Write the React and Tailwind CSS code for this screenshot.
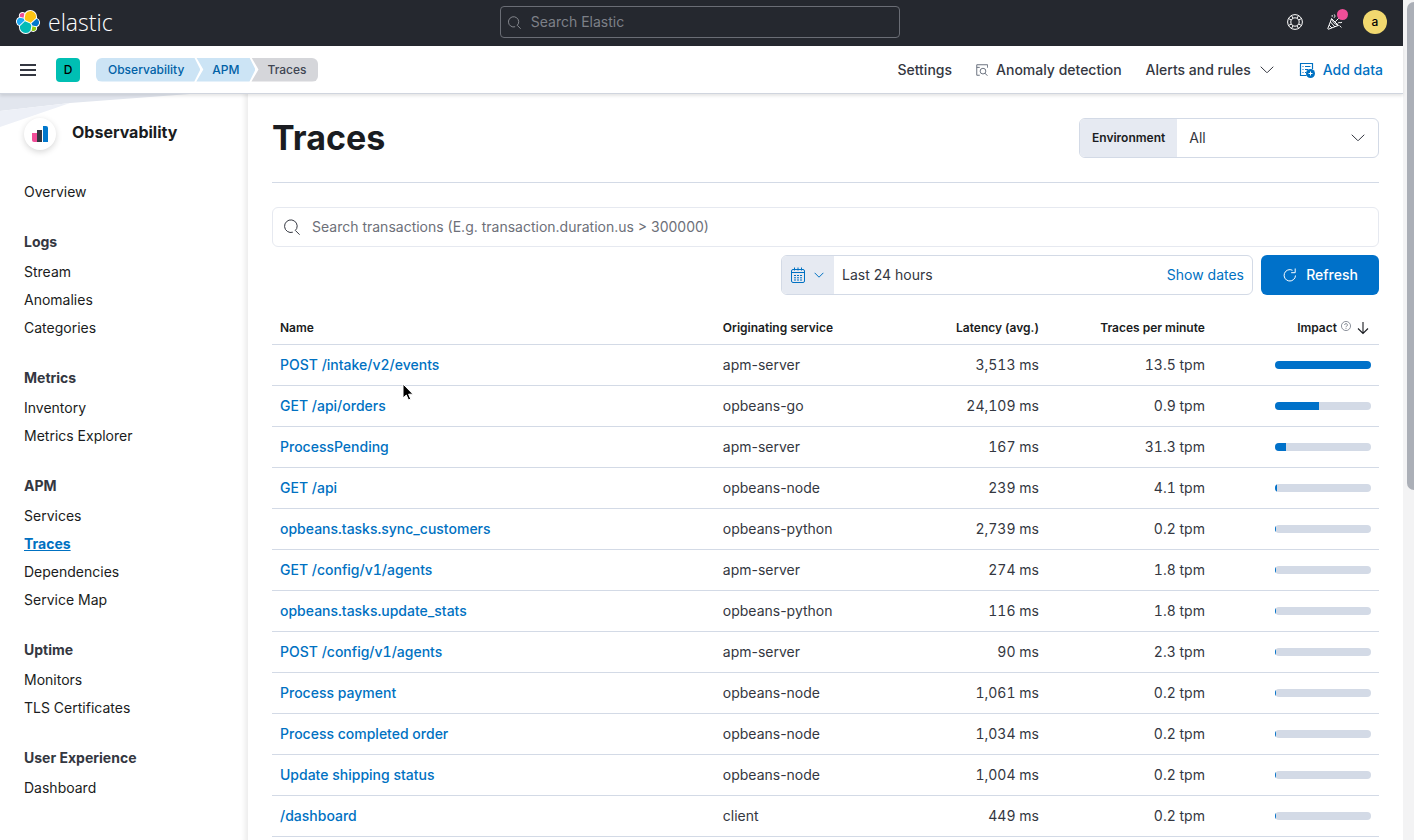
import { useState } from 'react'

const NAV = [
  { title: 'Logs', items: ['Stream', 'Anomalies', 'Categories'] },
  { title: 'Metrics', items: ['Inventory', 'Metrics Explorer'] },
  { title: 'APM', items: ['Services', 'Traces', 'Dependencies', 'Service Map'] },
  { title: 'Uptime', items: ['Monitors', 'TLS Certificates'] },
  { title: 'User Experience', items: ['Dashboard'] },
]

const TRACES = [
  { name: 'POST /intake/v2/events', service: 'apm-server', latency: '3,513 ms', tpm: '13.5 tpm', impact: 100 },
  { name: 'GET /api/orders', service: 'opbeans-go', latency: '24,109 ms', tpm: '0.9 tpm', impact: 46 },
  { name: 'ProcessPending', service: 'apm-server', latency: '167 ms', tpm: '31.3 tpm', impact: 11.5 },
  { name: 'GET /api', service: 'opbeans-node', latency: '239 ms', tpm: '4.1 tpm', impact: 2 },
  { name: 'opbeans.tasks.sync_customers', service: 'opbeans-python', latency: '2,739 ms', tpm: '0.2 tpm', impact: 1 },
  { name: 'GET /config/v1/agents', service: 'apm-server', latency: '274 ms', tpm: '1.8 tpm', impact: 1 },
  { name: 'opbeans.tasks.update_stats', service: 'opbeans-python', latency: '116 ms', tpm: '1.8 tpm', impact: 1 },
  { name: 'POST /config/v1/agents', service: 'apm-server', latency: '90 ms', tpm: '2.3 tpm', impact: 1 },
  { name: 'Process payment', service: 'opbeans-node', latency: '1,061 ms', tpm: '0.2 tpm', impact: 1 },
  { name: 'Process completed order', service: 'opbeans-node', latency: '1,034 ms', tpm: '0.2 tpm', impact: 1 },
  { name: 'Update shipping status', service: 'opbeans-node', latency: '1,004 ms', tpm: '0.2 tpm', impact: 1 },
  { name: '/dashboard', service: 'client', latency: '449 ms', tpm: '0.2 tpm', impact: 1 },
]

function Icon({ className = 'size-4', children }) {
  return (
    <svg viewBox="0 0 16 16" className={`shrink-0 ${className}`} fill="none" stroke="currentColor" aria-hidden="true">
      {children}
    </svg>
  )
}

function SearchIcon({ className }) {
  return (
    <Icon className={className}>
      <path d="M8.8 13.2A6.3 6.3 0 1 1 12.7 9.6L11.3 11.4 15.6 15.7" />
    </Icon>
  )
}

function ChevronIcon({ className }) {
  return (
    <Icon className={className}>
      <path d="M2 5l5.6 5.4a.6.6 0 0 0 .8 0L14 5" strokeLinecap="round" />
    </Icon>
  )
}

const CLUSTER = [
  ['#fec514', 'M12.58 13.787l7.002 3.211 7.066-6.213a7.849 7.849 0 00.152-1.557c0-4.287-3.464-7.775-7.722-7.775a7.68 7.68 0 00-6.365 3.404l-1.176 6.124 1.043 2.806z'],
  ['#02bcb7', 'M5.333 21.228A7.965 7.965 0 005.17 22.8c0 4.301 3.475 7.8 7.747 7.8a7.72 7.72 0 006.4-3.422l1.166-6.1-1.556-2.987-7.03-3.215-6.564 6.352z'],
  ['#f04e98', 'M5.288 9.067l4.8 1.137L11.14 4.72c-.65-.5-1.46-.76-2.28-.76a3.8 3.8 0 00-3.8 3.8c0 .44.08.88.23 1.3z'],
  ['#1ba9f5', 'M4.872 10.214C2.728 10.93 1.229 13 1.229 15.27c0 2.21 1.36 4.18 3.4 4.96l6.734-6.1-1.236-2.65-5.255-1.27z'],
  ['#93c90e', 'M20.873 27.178a3.738 3.738 0 002.275.785 3.793 3.793 0 003.785-3.81c0-.46-.08-.9-.235-1.31l-4.797-1.13-1.028 5.46z'],
  ['#0077cc', 'M21.848 20.564l5.28 1.236c2.145-.716 3.644-2.786 3.644-5.056 0-2.206-1.362-4.17-3.39-4.95l-6.907 6.06 1.373 2.71z'],
]

function ElasticLogo() {
  return (
    <svg viewBox="0 0 32 32" className="size-6 shrink-0" aria-hidden="true">
      {CLUSTER.map(([fill, d]) => (
        <path key={fill} d={d} fill="#fff" stroke="#fff" strokeWidth="2.6" strokeLinejoin="round" />
      ))}
      {CLUSTER.map(([fill, d]) => (
        <path key={fill} d={d} fill={fill} />
      ))}
    </svg>
  )
}

function TopBar() {
  return (
    <div className="flex h-[46px] items-center justify-between bg-[#25282f] px-4 pb-[2px]">
      <a href="#home" className="flex items-center gap-2 text-white">
        <ElasticLogo />
        <span className="font-['Open_Sans',sans-serif] text-[23px] leading-6 font-light">elastic</span>
      </a>
      <label className="flex h-8 w-[400px] items-center gap-2 rounded border border-[#6a6d75] px-[7px] text-[#9a9ca3]">
        <SearchIcon className="size-[13px]" />
        <input
          type="search"
          aria-label="Search Elastic"
          placeholder="Search Elastic"
          className="ml-[2px] min-w-0 flex-1 bg-transparent text-sm text-white outline-none placeholder:text-[#7d8088]"
        />
      </label>
      <div className="flex items-center gap-6 text-white">
        <button aria-label="Help">
          <Icon>
            <circle cx="8" cy="8" r="7.4" />
            <circle cx="8" cy="8" r="4.2" />
            <path d="M4.3 6L1.6 4.6M6 4.3L4.6 1.6M10 4.3l1.4-2.7M11.7 6l2.7-1.4M11.7 10l2.7 1.4M10 11.7l1.4 2.7M6 11.7l-1.4 2.7M4.3 10l-2.7 1.4" />
          </Icon>
        </button>
        <button aria-label="What's new" className="relative">
          <Icon>
            <path d="M4.6 4.6L.8 14.5c-.1.4.3.8.7.7l9.9-3.8z" strokeLinejoin="round" />
            <path d="M4.6 4.6c.4 2.8 3.4 6 6.8 6.8M3.5 8l4.5 5M2.2 11.2l2.8 2.8" />
            <path d="M7.3 3.5c1-.8.8-1.8.2-2.7M8.5 7.5l3-3M11 9c1.2-1.6 2.6.8 3.8-.6M12.7 11.8l1.4 1.4M5.2 1.5v.8" strokeLinecap="round" />
          </Icon>
          <span className="absolute -top-[5px] -right-[5px] size-[11px] rounded-full bg-[#f04e98]" />
        </button>
        <button aria-label="Account" className="-ml-1 flex size-6 items-center justify-center rounded-full bg-[#f1d86f] text-xs font-medium text-black">
          a
        </button>
      </div>
    </div>
  )
}

function NavHeader() {
  return (
    <div className="relative z-10 flex h-12 items-center justify-between border-b border-[#d0d5de] bg-white px-5 shadow-[0_2px_3px_rgba(0,0,0,0.1)]">
      <div className="flex items-center">
        <button aria-label="Toggle navigation" className="text-[#343741]">
          <Icon>
            <path d="M0 3h16M0 8h16M0 13h16" strokeWidth="2" />
          </Icon>
        </button>
        <button className="ml-5 flex size-6 items-center justify-center rounded bg-[#00bfb3] text-xs font-medium text-black">D</button>
        <nav aria-label="Breadcrumb" className="ml-4 flex h-6 text-xs leading-6 font-medium">
          <a
            href="#observability"
            className="rounded-l-md bg-[#cce4f5] pr-4 pl-3 text-[#0061a6] [clip-path:polygon(0_0,calc(100%-6px)_0,100%_50%,calc(100%-6px)_100%,0_100%)]"
          >
            Observability
          </a>
          <a
            href="#apm"
            className="-ml-1 bg-[#cce4f5] px-4 text-[#0061a6] [clip-path:polygon(0_0,calc(100%-6px)_0,100%_50%,calc(100%-6px)_100%,0_100%,7px_50%)]"
          >
            APM
          </a>
          <span className="-ml-1 rounded-r-md bg-[#d5d6da] pr-3 pl-4 text-[#404552] [clip-path:polygon(0_0,100%_0,100%_100%,0_100%,7px_50%)]">
            Traces
          </span>
        </nav>
      </div>
      <div className="flex items-center gap-6 text-sm font-medium text-[#343741]">
        <a href="#settings">Settings</a>
        <a href="#anomaly" className="flex items-center gap-2">
          <Icon className="size-3 text-[#69707d]">
            <path d="M5 15H1V1h14.5V5M1 4.5h4" strokeWidth="1.3" />
            <circle cx="9.3" cy="9.5" r="3.8" strokeWidth="1.3" />
            <path d="M12 12.5l3.5 3.2" strokeWidth="1.3" />
          </Icon>
          Anomaly detection
        </a>
        <button className="flex items-center gap-2">
          Alerts and rules
          <ChevronIcon />
        </button>
        <a href="#add" className="flex items-center gap-2 text-[#0071c2]">
          <Icon>
            <path d="M7.5 13.5H1.5v-12h12V7" strokeWidth="1.2" />
            <path d="M3.5 4.5h1M6 4.5h5.5M3.5 7.5h1M6 7.5h3M3.5 10.5h1M6 10.5h1" />
            <circle cx="11.5" cy="11.5" r="4.5" fill="currentColor" stroke="none" />
            <path d="M11.5 9.5v4M9.5 11.5h4" stroke="#fff" />
          </Icon>
          Add data
        </a>
      </div>
    </div>
  )
}

function SideNav() {
  return (
    <aside className="relative w-[248px] shrink-0 px-6 pt-6 pb-8 text-sm text-[#1a1c21] shadow-[inset_-7px_0_5px_-4px_rgba(0,0,0,0.08)]">
      <svg viewBox="0 0 240 40" className="absolute top-0 left-0 h-10 w-60" aria-hidden="true">
        <path d="M0 0h190L70 9 0 17z" fill="#e2e6ee" />
        <path d="M0 17l70-8L0 33z" fill="#edf0f7" />
      </svg>
      <div className="relative flex items-start gap-4">
        <span className="flex size-8 items-center justify-center rounded-full bg-white shadow-[0_2px_6px_rgba(0,0,0,0.16)]">
          <svg viewBox="0 0 16 16" className="size-4" aria-hidden="true">
            <path d="M0 7h5v9H2a2 2 0 0 1-2-2z" fill="#f04e98" />
            <path d="M5 4h5v12H5z" fill="#343741" />
            <path d="M11 0h3a2 2 0 0 1 2 2v14h-5z" fill="#0077cc" />
          </svg>
        </span>
        <h2 className="text-base leading-7 font-bold">Observability</h2>
      </div>
      <nav aria-label="Observability" className="mt-7">
        <a href="#overview" className="block leading-7">
          Overview
        </a>
        {NAV.map((section) => (
          <div key={section.title} className="mt-6">
            <h3 className="mb-1 leading-6 font-bold text-[#343741]">{section.title}</h3>
            <ul>
              {section.items.map((item) => (
                <li key={item} className="leading-7">
                  <a href={`#${item}`} className={item === 'Traces' ? 'font-bold text-[#0071c2] underline' : ''}>
                    {item}
                  </a>
                </li>
              ))}
            </ul>
          </div>
        ))}
      </nav>
    </aside>
  )
}

function TracesTable() {
  return (
    <table className="mt-4 w-full table-fixed text-sm text-[#343741]">
      <thead>
        <tr className="h-[33px] border-b border-[#d3dae6] text-xs text-[#1a1c21]">
          <th className="w-[40%] px-2 pt-[2px] text-left font-semibold">Name</th>
          <th className="w-[15%] px-2 pt-[2px] text-left font-semibold">Originating service</th>
          <th className="w-[15%] px-2 pt-[2px] text-right font-semibold">Latency (avg.)</th>
          <th className="w-[15%] px-2 pt-[2px] text-right font-semibold">Traces per minute</th>
          <th className="w-[15%] px-2 pt-[2px] font-semibold" aria-sort="descending">
            <button className="ml-auto flex items-center gap-1">
              Impact
              <Icon className="mb-1 size-[10px] text-[#69707d]">
                <circle cx="8" cy="8" r="7.3" strokeWidth="1.2" />
                <path d="M5.8 6.3a2.2 2.2 0 1 1 3.2 2c-.7.4-1 .8-1 1.7M8 11.5v1.3" strokeWidth="1.3" />
              </Icon>
              <Icon>
                <path d="M8 2v11.5M3 8.5l5 5 5-5" strokeWidth="1.1" />
              </Icon>
            </button>
          </th>
        </tr>
      </thead>
      <tbody>
        {TRACES.map((row) => (
          <tr key={row.name} className="h-[41px] border-b border-[#d3dae6]">
            <td className="px-2 tabular-nums">
              <a href="#trace" className="font-medium text-[#0071c2]">
                {row.name}
              </a>
            </td>
            <td className="px-2">{row.service}</td>
            <td className="px-2 text-right tabular-nums">{row.latency}</td>
            <td className="px-2 text-right tabular-nums">{row.tpm}</td>
            <td className="px-2">
              <div className="ml-auto h-2 w-24 overflow-hidden rounded-full bg-[#d3dae6]">
                <div className="h-full bg-[#0071c9]" style={{ width: `${row.impact}%` }} />
              </div>
            </td>
          </tr>
        ))}
      </tbody>
    </table>
  )
}

export default function App() {
  const [query, setQuery] = useState('')
  return (
    <div className="relative flex min-h-screen bg-white font-[Inter,sans-serif]">
      <div className="flex min-w-0 flex-1 flex-col">
        <TopBar />
        <NavHeader />
        <div className="flex flex-1">
          <SideNav />
          <main className="min-w-0 flex-1 px-6 pt-6">
            <div className="flex items-center justify-between border-b border-[#d3dae6] pb-6">
              <h1 className="text-[34px] leading-10 font-bold text-[#1a1c21]">Traces</h1>
              <div className="flex h-10 w-[300px] items-center overflow-hidden rounded-md border border-[#d3dae6]">
                <label htmlFor="environment" className="flex h-full items-center bg-[#e6eaf2] px-3 text-xs font-semibold text-[#1a1c21]">
                  Environment
                </label>
                <div className="relative flex h-full flex-1 items-center">
                  <select id="environment" className="h-full w-full appearance-none bg-transparent px-3 text-sm text-[#343741]">
                    <option>All</option>
                  </select>
                  <ChevronIcon className="pointer-events-none absolute right-3 size-4 text-[#343741]" />
                </div>
              </div>
            </div>
            <label className="mt-6 flex h-10 items-center gap-3 rounded-md border border-[#e6e9f0] px-[11px] text-[#343741]">
              <SearchIcon className="size-4" />
              <input
                value={query}
                onChange={(e) => setQuery(e.target.value)}
                aria-label="Search transactions"
                placeholder="Search transactions (E.g. transaction.duration.us > 300000)"
                className="min-w-0 flex-1 bg-transparent text-sm outline-none placeholder:text-[#6d7079]"
              />
            </label>
            <div className="mt-2 flex justify-end gap-2">
              <div className="flex h-10 w-[472px] items-center overflow-hidden rounded-md border border-[#d3dae6] text-sm">
                <button aria-label="Date quick select" className="flex h-full items-center gap-2 bg-[#e6eaf2] pr-[10px] pl-2 text-[#0071c2]">
                  <Icon>
                    <rect x="1.5" y="2.5" width="13" height="13" rx="1.5" />
                    <path d="M1.5 5.5h13M4.5.5v3M8 .5v3M11.5.5v3" />
                    <path d="M4 8.5h2M7 8.5h2M10 8.5h2M4 10.8h2M7 10.8h2M10 10.8h2M4 13h2M7 13h2M10 13h2" />
                  </Icon>
                  <Icon className="size-[10px]">
                    <path d="M1 4.5l7 7 7-7" strokeWidth="1.6" />
                  </Icon>
                </button>
                <button className="flex h-full flex-1 items-center justify-between px-2 text-[#343741]">
                  Last 24 hours
                  <span className="text-[#0071c2]">Show dates</span>
                </button>
              </div>
              <button className="flex h-10 w-[118px] items-center justify-center gap-2 rounded-md bg-[#0071c9] text-sm font-medium text-white">
                <Icon>
                  <path d="M13.5 8.5A5.7 5.7 0 1 1 10.5 3.3M13.2 1.5v4.2h-4" />
                </Icon>
                Refresh
              </button>
            </div>
            <TracesTable />
          </main>
        </div>
      </div>
      <div className="w-[11px] shrink-0 bg-[#f3f3f4] pt-[2px] pl-1">
        <div className="h-[488px] rounded-l-full bg-[#abafb7]" />
      </div>
      <svg viewBox="0 0 12 18" className="absolute top-[383px] left-[402px] h-[18px] w-3" aria-hidden="true">
        <path d="M1 1v14l3.3-3 2.2 5 2.2-1-2.1-4.8H11z" fill="#000" stroke="#fff" />
      </svg>
    </div>
  )
}
